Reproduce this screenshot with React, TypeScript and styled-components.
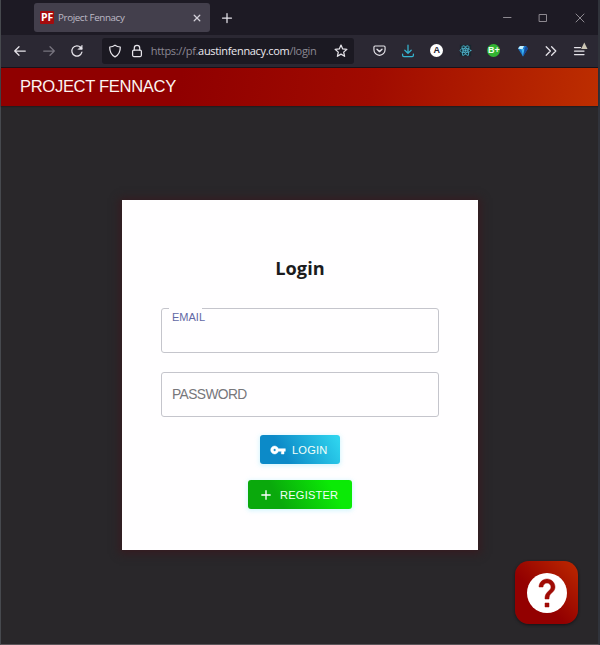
import React from "react";
import styled, { createGlobalStyle } from "styled-components";

const GlobalStyle = createGlobalStyle`
  *, *::before, *::after { box-sizing: border-box; }
  html, body { margin: 0; padding: 0; }
  body { background: #29272b; overflow: hidden; }
`;

const Window = styled.div`
  width: 600px;
  height: 645px;
  display: flex;
  flex-direction: column;
  background: #29272a;
  border-left: 1px solid #46494e;
  border-right: 2px solid #30333b;
  border-bottom: 1px solid #5b5459;
  font-family: "Liberation Sans", Arial, sans-serif;
`;

const TabStrip = styled.div`
  height: 35px;
  flex: none;
  display: flex;
  align-items: flex-start;
  padding: 3px 0 0 33px;
  background: #1d1a24;
`;

const Tab = styled.div`
  width: 176px;
  height: 29px;
  display: flex;
  align-items: center;
  padding: 0 7px 0 6px;
  border-radius: 3px;
  background: #433f4c;
`;

const Favicon = styled.span`
  width: 14px;
  height: 13px;
  border-radius: 1px;
  background: #a40b0d;
  color: #fff;
  font: bold 10.5px/13px "Open Sans", sans-serif;
  letter-spacing: -0.3px;
  text-align: center;
`;

const TabTitle = styled.span`
  flex: 1;
  margin-left: 4px;
  color: #bdbac6;
  font: 9.8px/16px "Open Sans", sans-serif;
  letter-spacing: -0.38px;
  white-space: nowrap;
`;

const Glyph = styled.svg<{ $size: number; $color?: string }>`
  display: block;
  flex: none;
  overflow: visible;
  width: ${(p) => p.$size}px;
  height: ${(p) => p.$size}px;
  color: ${(p) => p.$color ?? "#e6e4ea"};
  fill: none;
  stroke: currentColor;
  stroke-width: 1.25;
  stroke-linecap: round;
  stroke-linejoin: round;
`;

const NewTab = styled.div`
  width: 34px;
  height: 29px;
  display: grid;
  place-items: center;
`;

const WindowControls = styled.div`
  margin-left: auto;
  height: 29px;
  display: grid;
  grid-template-columns: repeat(3, 36.5px);
  place-items: center;
`;

const Toolbar = styled.div`
  height: 33px;
  flex: none;
  display: flex;
  align-items: center;
  padding: 0 4px 1px 5px;
  background: #2b2833;
  border-bottom: 1px solid #17121a;
`;

const ToolSlot = styled.div`
  width: 28.6px;
  height: 28px;
  flex: none;
  display: grid;
  place-items: center;
`;

const AddressBar = styled.div`
  width: 252px;
  height: 26px;
  flex: none;
  display: flex;
  align-items: center;
  margin: 0 auto 0 10px;
  padding: 0 6px;
  border-radius: 3px;
  background: #1b1922;
`;

const Url = styled.span`
  flex: 1;
  margin-left: 7px;
  color: #8b8893;
  font: 11px/16px "Open Sans", sans-serif;
  letter-spacing: -0.32px;
  white-space: nowrap;
`;

const Host = styled.span`
  color: #eceaf0;
`;

const ShieldGap = styled.span`
  width: 8px;
`;

const AppBar = styled.header`
  height: 38px;
  flex: none;
  display: flex;
  align-items: center;
  padding: 0 19px;
  color: #fbf3f1;
  font-size: 16.6px;
  letter-spacing: -0.34px;
  background: linear-gradient(100deg, #900000 30%, #a00b00 62%, #bd2e00 100%);
  box-shadow: 0 1px 1px #231d1f;
`;

const Page = styled.main`
  flex: 1;
  display: flex;
  flex-direction: column;
  align-items: center;
  padding-top: 94px;
`;

const Card = styled.section`
  width: 356px;
  height: 350px;
  flex: none;
  display: flex;
  flex-direction: column;
  align-items: center;
  margin-left: 1px;
  padding-top: 54px;
  background: #fffeff;
  box-shadow: 0 1px 8px 3px #351c21;
`;

const Title = styled.h1`
  margin: 0;
  height: 28px;
  color: #1b1b1d;
  font: bold 18.2px/28px "Open Sans", "Noto Sans", sans-serif;
`;

const FieldBox = styled.div<{ $active?: boolean }>`
  width: 278px;
  height: 45px;
  margin-top: ${(p) => (p.$active ? "26px" : "19px")};
  padding: 0 10px;
  display: flex;
  align-items: ${(p) => (p.$active ? "flex-start" : "center")};
  border: 1px solid #c5c5cc;
  border-radius: 3px;
`;

const FieldLabel = styled.label<{ $active?: boolean }>`
  color: ${(p) => (p.$active ? "#6268a5" : "#77777b")};
  font-size: ${(p) => (p.$active ? 11 : 13.8)}px;
  letter-spacing: ${(p) => (p.$active ? "0" : "-0.6px")};
  line-height: 16px;
`;

const Notch = styled.span`
  width: 33px;
  height: 1px;
  margin: -1px -30px 0 -3px;
  background: #fffeff;
`;

const ActionButton = styled.button<{ $width: number; $tone: "blue" | "green"; $gap: number }>`
  width: ${(p) => p.$width}px;
  height: 29px;
  margin: ${(p) => (p.$tone === "blue" ? "18px" : "16px")} 0 0;
  padding: 0 0 0 10px;
  display: flex;
  align-items: center;
  gap: ${(p) => p.$gap}px;
  border: 0;
  border-radius: 3px;
  color: #f3fff8;
  font: 11.1px/16px "Liberation Sans", Arial, sans-serif;
  letter-spacing: 0.2px;
  background: ${(p) =>
    p.$tone === "blue"
      ? "linear-gradient(60deg, #0c8ac8 30%, #2ed3ee 95%)"
      : "linear-gradient(60deg, #0aa90c 30%, #0bea06 80%)"};
  box-shadow: 0 1px 4px 1px rgba(140, 230, 250, 0.35);
`;

const Help = styled.button`
  position: fixed;
  right: 22px;
  bottom: 21px;
  width: 63px;
  height: 63px;
  padding: 0;
  display: grid;
  place-items: center;
  border: 0;
  border-radius: 14px;
  background: linear-gradient(45deg, #930000 40%, #bd2900 100%);
  box-shadow: 0 1px 3px #171316;
`;

const SolidGlyph = styled.svg<{ $size: number }>`
  display: block;
  flex: none;
  width: ${(p) => p.$size}px;
  height: ${(p) => p.$size}px;
  fill: currentColor;
  color: #fff;
`;

const Badge = styled.span<{ $bg: string; $fg: string; $font: number }>`
  width: 13px;
  height: 13px;
  border-radius: 50%;
  background: ${(p) => p.$bg};
  color: ${(p) => p.$fg};
  font: bold ${(p) => p.$font}px/13px "Liberation Sans", sans-serif;
  text-align: center;
`;

function TabBar() {
  return (
    <TabStrip>
      <Tab>
        <Favicon>PF</Favicon>
        <TabTitle>Project Fennacy</TabTitle>
        <Glyph $size={12} $color="#d3d0d9" viewBox="0 0 12 12">
          <path d="M3.200 3.200l5.600 5.600M8.800 3.200L3.200 8.800" />
        </Glyph>
      </Tab>
      <NewTab>
        <Glyph $size={12} viewBox="0 0 12 12">
          <path d="M6 1.500v9M1.500 6h9" />
        </Glyph>
      </NewTab>
      <WindowControls>
        <Glyph $size={12} $color="#8d8990" viewBox="0 0 12 12">
          <path d="M2.500 5.500h7.500" strokeWidth="1" />
        </Glyph>
        <Glyph $size={12} $color="#8d8990" viewBox="0 0 12 12">
          <path d="M2.500 2.500h7v7h-7z" strokeWidth="1" />
        </Glyph>
        <Glyph $size={12} $color="#8d8990" viewBox="0 0 12 12">
          <path d="M2 2l8 8M10 2l-8 8" strokeWidth="1" />
        </Glyph>
      </WindowControls>
    </TabStrip>
  );
}

function NavBar() {
  return (
    <Toolbar>
      <ToolSlot>
        <Glyph $size={14} viewBox="0 0 14 14">
          <path d="M12.300 7H1.700M6 2.700L1.700 7 6 11.300" />
        </Glyph>
      </ToolSlot>
      <ToolSlot>
        <Glyph $size={14} $color="#77747f" viewBox="0 0 14 14">
          <path d="M1.700 7h10.600M8 2.700L12.300 7 8 11.300" />
        </Glyph>
      </ToolSlot>
      <ToolSlot>
        <Glyph $size={14} viewBox="0 0 14 14">
          <path d="M11.900 8.200a5.100 5.100 0 1 1-1.200-4.700l1.100 1.100" />
          <path d="M12.200 1.400v4H8.200z" fill="currentColor" strokeWidth="0.500" />
        </Glyph>
      </ToolSlot>
      <AddressBar>
        <Glyph $size={14} viewBox="0 0 14 14">
          <path d="M7 1.200C8.600 2.400 10.300 2.900 12.300 3c.1 4.300-1.300 7.700-5.300 9.900C3 10.700 1.600 7.300 1.700 3 3.700 2.900 5.400 2.400 7 1.200z" />
        </Glyph>
        <ShieldGap />
        <Glyph $size={14} viewBox="0 0 14 14">
          <rect x="2.600" y="6.200" width="8.800" height="6.300" rx="1.200" />
          <path d="M4.300 6V4a2.700 2.700 0 0 1 5.400 0v2" />
        </Glyph>
        <Url>
          https://pf.<Host>austinfennacy.com</Host>/login
        </Url>
        <Glyph $size={14} viewBox="0 0 14 14">
          <path d="M7 1.100l1.700 3.800 4.200.4-3.200 2.800.9 4.200L7 10.100l-3.600 2.200.9-4.200L1.100 5.300l4.200-.4z" />
        </Glyph>
      </AddressBar>
      <ToolSlot>
        <Glyph $size={13} viewBox="0 0 14 14">
          <path d="M2.200 2.200h9.600q1.200 0 1.200 1.200v2.800a6 6 0 0 1-12 0V3.400q0-1.200 1.200-1.200z" />
          <path d="M4.300 5.700L7 8.200l2.700-2.500" strokeWidth="1.500" />
        </Glyph>
      </ToolSlot>
      <ToolSlot>
        <Glyph $size={14} $color="#35b4d0" viewBox="0 0 14 14">
          <path d="M7 1.200v8M3.800 6.200L7 9.300l3.200-3.100M1.600 10v1.200q0 1.300 1.300 1.300h8.200q1.300 0 1.300-1.300V10" />
        </Glyph>
      </ToolSlot>
      <ToolSlot>
        <Badge $bg="#ffffff" $fg="#252330" $font={9}>A</Badge>
      </ToolSlot>
      <ToolSlot>
        <Glyph $size={13} $color="#4fb3cc" viewBox="0 0 14 14">
          <rect x="1" y="1" width="12" height="12" fill="#17272e" stroke="none" />
          <g strokeWidth="0.900">
            <ellipse cx="7" cy="7" rx="5.800" ry="2.300" />
            <ellipse cx="7" cy="7" rx="5.800" ry="2.300" transform="rotate(60 7 7)" />
            <ellipse cx="7" cy="7" rx="5.800" ry="2.300" transform="rotate(120 7 7)" />
          </g>
          <circle cx="7" cy="7" r="0.700" fill="currentColor" />
        </Glyph>
      </ToolSlot>
      <ToolSlot>
        <Badge $bg="#32b432" $fg="#efffee" $font={9}>B+</Badge>
      </ToolSlot>
      <ToolSlot>
        <Glyph $size={12} viewBox="0 0 12 12">
          <g stroke="none">
            <path d="M3 1h6L11 3.500 6 11.500 1 3.500z" fill="#1978cd" />
            <path d="M3 1h4L5.500 4.500 1 3.500z" fill="#c4f1ff" />
            <path d="M4.500 4h3L6 11.500z" fill="#40b5f0" />
            <path d="M9 1L11 3.500 6 11.500 7.500 4z" fill="#164b9d" />
          </g>
        </Glyph>
      </ToolSlot>
      <ToolSlot>
        <Glyph $size={14} viewBox="0 0 14 14">
          <path d="M2.200 2.700L6.400 7l-4.200 4.300M7.600 2.700L11.800 7l-4.200 4.300" />
        </Glyph>
      </ToolSlot>
      <ToolSlot>
        <Glyph $size={14} viewBox="0 0 14 14">
          <path d="M1.500 3.500h6M1.500 7h9.500M1.500 10.500h9.500" />
          <path d="M11.300 -1.500l3.200 6.500h-6.400z" fill="#cbc5b4" stroke="none" />
        </Glyph>
      </ToolSlot>
    </Toolbar>
  );
}

export default function App() {
  return (
    <>
      <GlobalStyle />
      <Window>
        <TabBar />
        <NavBar />
        <AppBar>PROJECT FENNACY</AppBar>
        <Page>
          <Card>
            <Title>Login</Title>
            <FieldBox $active>
              <Notch />
              <FieldLabel $active>EMAIL</FieldLabel>
            </FieldBox>
            <FieldBox>
              <FieldLabel>PASSWORD</FieldLabel>
            </FieldBox>
            <ActionButton $width={80} $tone="blue" $gap={6}>
              <SolidGlyph $size={16} viewBox="0 0 24 24">
                <path
                  d="M12.650 10A6 6 0 1 0 12.650 14H17v4h4v-4h2v-4zM7 14a2 2 0 1 1 0-4 2 2 0 0 1 0 4z"
                  stroke="currentColor"
                  strokeWidth="0.700"
                />
              </SolidGlyph>
              LOGIN
            </ActionButton>
            <ActionButton $width={104} $tone="green" $gap={6}>
              <SolidGlyph $size={16} viewBox="0 0 24 24">
                <path d="M19 13h-6v6h-2v-6H5v-2h6V5h2v6h6z" />
              </SolidGlyph>
              REGISTER
            </ActionButton>
          </Card>
        </Page>
        <Help aria-label="Help">
          <SolidGlyph $size={48} viewBox="0 0 24 24">
            <circle cx="12" cy="12" r="10" />
            <path
              d="M13 19h-2v-2h2v2zm2.070-7.750l-.9.920C13.450 12.900 13 13.500 13 15h-2v-.5c0-1.100.450-2.100 1.170-2.830l1.240-1.260c.370-.360.590-.860.590-1.410 0-1.100-.9-2-2-2s-2 .9-2 2H8c0-2.210 1.790-4 4-4s4 1.790 4 4c0 .880-.360 1.680-.930 2.250z"
              fill="#a00b05"
              stroke="#a00b05"
              strokeWidth="0.250"
            />
          </SolidGlyph>
        </Help>
      </Window>
    </>
  );
}
